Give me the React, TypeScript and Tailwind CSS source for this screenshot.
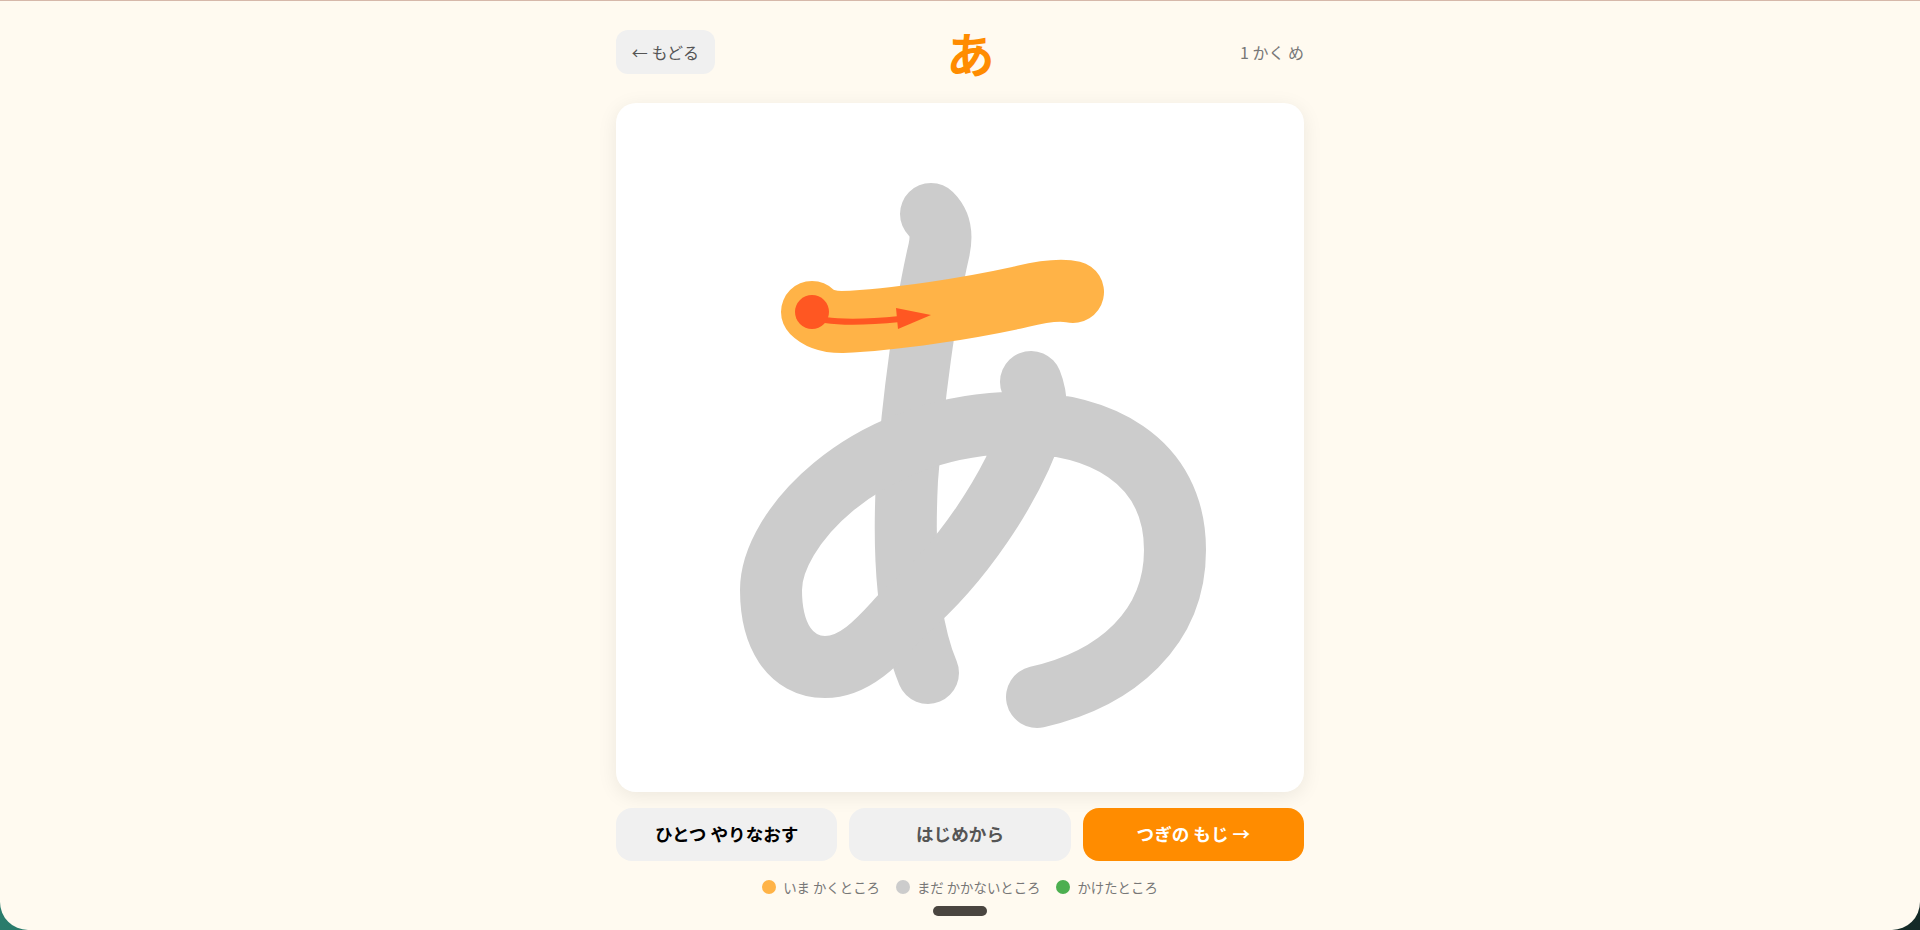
import React from "react";

const STROKES = [
  "M931 214 C941 224 942 236 939 250 C925 310 913 400 907 480 C903 560 908 625 928 673",
  "M1031 382 C1035 392 1037 405 1035 420 C1012 490 960 565 905 612 C890 626 862 667 825 667 C790 667 771 635 771 590 C771 530 860 430 1005 423 C1100 420 1175 460 1175 550 C1175 628 1117 679 1037 697",
];

const LEGEND = [
  { label: "いま かくところ", color: "bg-[#ffb347]" },
  { label: "まだ かかないところ", color: "bg-[#cccccc]" },
  { label: "かけたところ", color: "bg-[#4caf50]" },
];

export default function App() {
  return (
    <div className="h-[930px] overflow-hidden bg-gradient-to-r from-[#2a7c6c] via-[#1d4f48] to-[#142a27] [font-family:'Noto_Sans_CJK_JP',sans-serif]">
      <div className="relative h-full rounded-b-[28px] border-t border-[#d6b8aa] bg-[#fffaf0]">
        <div className="mx-auto flex w-[688px] flex-col pt-[29px]">
          <header className="flex h-[44px] items-center justify-between">
            <button className="h-[44px] w-[99px] rounded-xl bg-[#f0f0f0] text-base text-[#555555]">← もどる</button>
            <span className="text-[48px] leading-none font-bold text-[#ff8c00]">あ</span>
            <span className="w-[78px] text-right text-base text-[#777777]">1 かく め</span>
          </header>

          <div className="mt-[29px] h-[689px] overflow-hidden rounded-[20px] bg-white shadow-[0_4px_20px_rgba(0,0,0,0.08)]">
            <svg viewBox="616 103 688 689" className="block h-full w-full" fill="none" strokeLinecap="round" strokeLinejoin="round">
              {STROKES.map((d) => (
                <path key={d} d={d} stroke="#cccccc" strokeWidth={62} />
              ))}
              <path d="M812 312 C818 318 828 322 842 322 C895 320 970 308 1020 297 C1040 292 1060 289 1073 292" stroke="#ffb347" strokeWidth={62} />
              <path d="M825 320 C845 323 870 322 900 319" stroke="#ff5722" strokeWidth={6} />
              <polygon points="896,308 931,315 898,329" fill="#ff5722" />
              <circle cx={812} cy={312} r={17} fill="#ff5722" />
            </svg>
          </div>

          <div className="mt-4 grid grid-cols-3 gap-3">
            <button className="h-[53px] rounded-2xl bg-[#f0f0f0] text-[17.6px] font-bold text-black">ひとつ やりなおす</button>
            <button className="h-[53px] rounded-2xl bg-[#f0f0f0] text-[17.6px] font-bold text-[#555555]">はじめから</button>
            <button className="h-[53px] rounded-2xl bg-[#ff8c00] text-[17.6px] font-bold text-white">つぎの もじ →</button>
          </div>

          <div className="mt-[17px] flex items-center justify-center gap-4">
            {LEGEND.map((item) => (
              <div key={item.label} className="flex items-center gap-[7px] text-[13.4px] leading-[18px] text-[#777777]">
                <span className={`h-[14px] w-[14px] rounded-full ${item.color}`} />
                {item.label}
              </div>
            ))}
          </div>
        </div>

        <div className="absolute bottom-[14px] left-1/2 h-[10px] w-[54px] -translate-x-1/2 rounded-full bg-[#4a4540]" />
      </div>
    </div>
  );
}
